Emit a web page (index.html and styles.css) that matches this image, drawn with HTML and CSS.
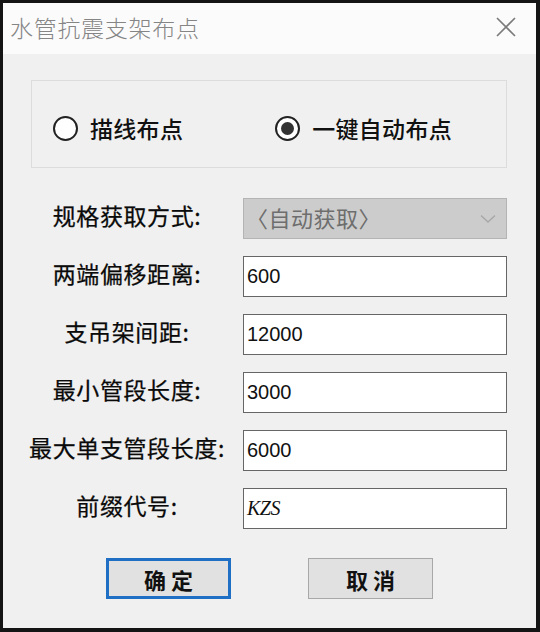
FILE: index.html
```html
<!DOCTYPE html>
<html lang="zh-CN">
<head>
<meta charset="utf-8">
<title>水管抗震支架布点</title>
<link rel="stylesheet" href="styles.css">
</head>
<body>
<div class="window">
  <div class="titlebar">
    <span class="title">水管抗震支架布点</span>
    <svg class="close" width="20" height="20" viewBox="0 0 20 20"><path d="M1 1 L19 19 M19 1 L1 19" stroke="#7a7a7a" stroke-width="1.6" fill="none"/></svg>
  </div>
  <div class="content">
    <div class="group">
      <label class="radio"><span class="circle"></span><span>描线布点</span></label>
      <label class="radio checked"><span class="circle"><span class="dot"></span></span><span>一键自动布点</span></label>
    </div>
    <div class="form">
      <div class="label">规格获取方式:</div>
      <div class="combo"><span>〈自动获取〉</span><svg class="chev" width="16" height="10" viewBox="0 0 16 10"><path d="M1 1.5 L8 8 L15 1.5" stroke="#a8a8a8" stroke-width="1.5" fill="none"/></svg></div>
      <div class="label">两端偏移距离:</div>
      <div class="input">600</div>
      <div class="label">支吊架间距:</div>
      <div class="input">12000</div>
      <div class="label">最小管段长度:</div>
      <div class="input">3000</div>
      <div class="label">最大单支管段长度:</div>
      <div class="input">6000</div>
      <div class="label">前缀代号:</div>
      <div class="input serif">KZS</div>
    </div>
    <div class="buttons">
      <div class="btn primary">确 定</div>
      <div class="btn">取 消</div>
    </div>
  </div>
</div>
</body>
</html>
```
FILE: styles.css
```css
html, body {
  margin: 0;
  padding: 0;
  background: #141414;
}
body {
  width: 540px;
  height: 632px;
  overflow: hidden;
  font-family: "Noto Sans CJK SC", "Microsoft YaHei", sans-serif;
}
.window {
  margin: 3px 4px 0 3px;
  width: 533px;
  height: 625px;
  background: #f0f0f0;
  display: flex;
  flex-direction: column;
}
.titlebar {
  height: 51px;
  background: #fbfbfb;
  display: flex;
  align-items: center;
  justify-content: space-between;
  padding: 0 20px 0 7px;
}
.title {
  font-size: 23px;
  letter-spacing: 0.7px;
  color: #858585;
  font-weight: 300;
  margin-top: -4px;
}
.close {
  margin-top: -3px;
}
.content {
  flex: 1;
  display: flex;
  flex-direction: column;
}
.group {
  margin: 26px 29px 0 28px;
  height: 88px;
  border: 1px solid #dcdcdc;
  display: flex;
  align-items: center;
  padding: 8px 0 0 21px;
  box-sizing: border-box;
}
.radio {
  display: flex;
  align-items: center;
  gap: 12px;
  font-size: 23px;
  font-weight: 500;
  color: #111;
  letter-spacing: 0.3px;
}
.radio + .radio {
  margin-left: 92px;
}
.circle {
  width: 21px;
  height: 21px;
  border: 2px solid #222;
  border-radius: 50%;
  background: #fff;
  display: flex;
  align-items: center;
  justify-content: center;
}
.dot {
  width: 13px;
  height: 13px;
  border-radius: 50%;
  background: #333;
}
.form {
  margin: 30px 29px 0 11px;
  display: grid;
  grid-template-columns: 226px 264px;
  column-gap: 3px;
  row-gap: 17px;
}
.label {
  height: 41px;
  display: flex;
  align-items: center;
  justify-content: center;
  font-size: 23px;
  font-weight: 400;
  color: #0a0a0a;
  letter-spacing: 0.6px;
  white-space: nowrap;
  margin-top: -4px;
  -webkit-text-stroke: 0.25px #0a0a0a;
}
.combo {
  height: 41px;
  box-sizing: border-box;
  background: #cccccc;
  border: 1px solid #b4b4b4;
  display: flex;
  align-items: center;
  justify-content: space-between;
  padding: 0 10px 0 2px;
  color: #6e6e6e;
  font-size: 22px;
  letter-spacing: 0.5px;
}
.combo span {
  margin-top: -4px;
}
.input {
  height: 41px;
  box-sizing: border-box;
  background: #fff;
  border: 1.5px solid #666;
  display: flex;
  align-items: center;
  padding: 0 0 0 3px;
  font-family: "Liberation Sans", Arial, sans-serif;
  font-size: 20px;
  color: #111;
}
.input.serif {
  font-family: "Liberation Serif", serif;
  font-style: italic;
  letter-spacing: -0.5px;
}
.buttons {
  margin-top: 29px;
  display: flex;
  justify-content: center;
  gap: 77px;
}
.btn {
  width: 125px;
  height: 41px;
  box-sizing: border-box;
  background: #e1e1e1;
  border: 1px solid #a8a8a8;
  display: flex;
  align-items: center;
  justify-content: center;
  font-size: 22px;
  font-weight: 700;
  color: #111;
  white-space: pre;
}
.btn.primary {
  border: 3px solid #1f6fc5;
}
```
